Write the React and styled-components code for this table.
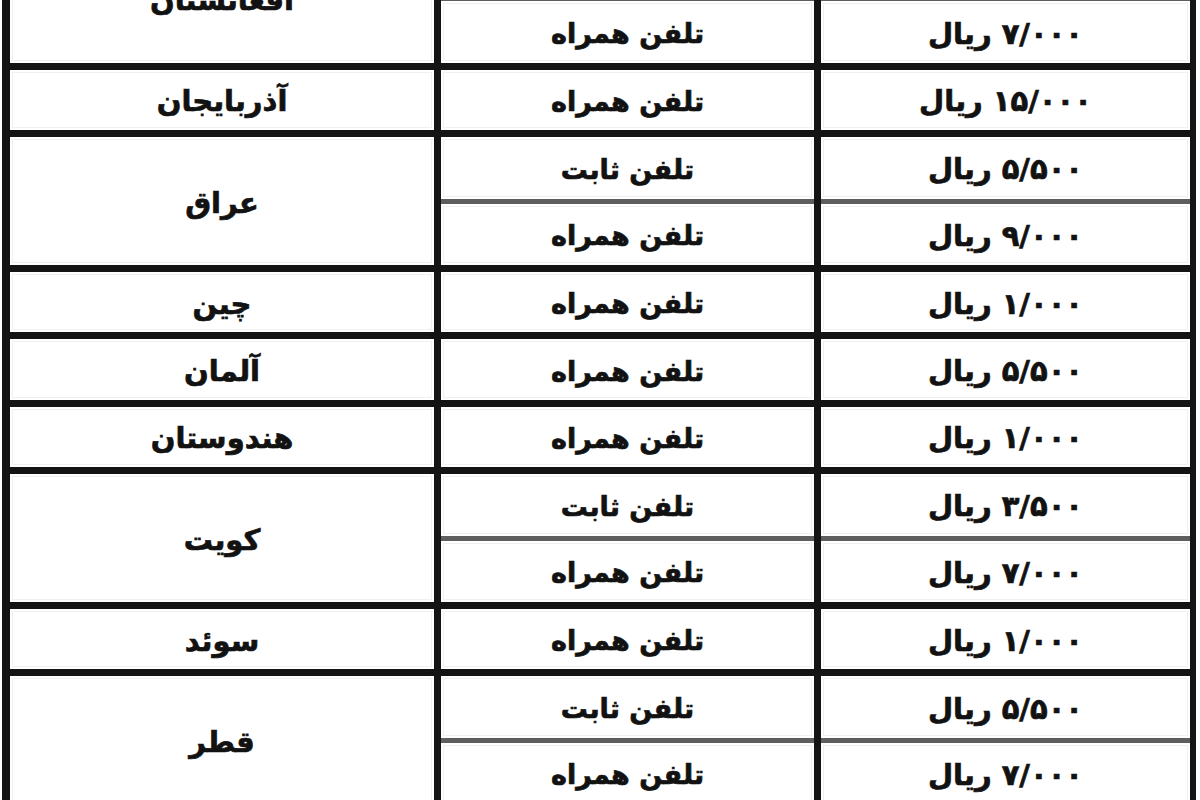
import React from "react";
import styled, { createGlobalStyle } from "styled-components";

const PITCH = 67.4;
const LINE = 7;

const GlobalStyle = createGlobalStyle`
  html, body {
    margin: 0;
    padding: 0;
    background: #fff;
    overflow: hidden;
  }
`;

const Page = styled.div`
  width: 1200px;
  height: 800px;
  overflow: hidden;
  background: #fff;
`;

// the black background shows through the gaps as the thick rules
const Table = styled.div`
  display: grid;
  grid-template-columns: 424px 373px 369px;
  column-gap: ${LINE}px;
  row-gap: ${LINE}px;
  width: max-content;
  margin: -65px 0 0 2px;
  padding: 0 6px 0 8px;
  background: #141414;
`;

const Cell = styled.div`
  display: flex;
  align-items: center;
  justify-content: center;
  padding-top: 3px;
  box-sizing: border-box;
  background: #fff;
  box-shadow: inset 0 0 0 2px #fff, inset 0 0 0 3px #f0f0f0;
  font-family: "DejaVu Sans", sans-serif;
  font-weight: 700;
  font-size: ${p => (p.$big ? 29 : 27)}px;
  -webkit-text-stroke: 0.7px #121212;
  color: #121212;
  direction: rtl;
  white-space: nowrap;
`;

const CountryCell = styled(Cell)`
  height: ${p => p.$rows * PITCH - LINE}px;
`;

const Stack = styled.div`
  display: flex;
  flex-direction: column;
  background: #fff;
`;

const SubCell = styled(Cell)`
  flex: 1;
  & + & {
    border-top: 5px solid #5e5e5e;
  }
`;

const groups = [
  {
    country: "افغانستان",
    lines: [
      ["تلفن ثابت", "۵/۵۰۰ ریال"],
      ["تلفن همراه", "۷/۰۰۰ ریال"]
    ]
  },
  { country: "آذربایجان", lines: [["تلفن همراه", "۱۵/۰۰۰ ریال"]] },
  {
    country: "عراق",
    lines: [
      ["تلفن ثابت", "۵/۵۰۰ ریال"],
      ["تلفن همراه", "۹/۰۰۰ ریال"]
    ]
  },
  { country: "چین", lines: [["تلفن همراه", "۱/۰۰۰ ریال"]] },
  { country: "آلمان", lines: [["تلفن همراه", "۵/۵۰۰ ریال"]] },
  { country: "هندوستان", lines: [["تلفن همراه", "۱/۰۰۰ ریال"]] },
  {
    country: "کویت",
    lines: [
      ["تلفن ثابت", "۳/۵۰۰ ریال"],
      ["تلفن همراه", "۷/۰۰۰ ریال"]
    ]
  },
  { country: "سوئد", lines: [["تلفن همراه", "۱/۰۰۰ ریال"]] },
  {
    country: "قطر",
    lines: [
      ["تلفن ثابت", "۵/۵۰۰ ریال"],
      ["تلفن همراه", "۷/۰۰۰ ریال"]
    ]
  }
];

export default function App() {
  return (
    <Page>
      <GlobalStyle />
      <Table>
        {groups.map(g => (
          <React.Fragment key={g.country}>
            <CountryCell $big $rows={g.lines.length}>
              {g.country}
            </CountryCell>
            <Stack>
              {g.lines.map((l, i) => (
                <SubCell key={i}>{l[0]}</SubCell>
              ))}
            </Stack>
            <Stack>
              {g.lines.map((l, i) => (
                <SubCell $big key={i}>
                  {l[1]}
                </SubCell>
              ))}
            </Stack>
          </React.Fragment>
        ))}
      </Table>
    </Page>
  );
}
